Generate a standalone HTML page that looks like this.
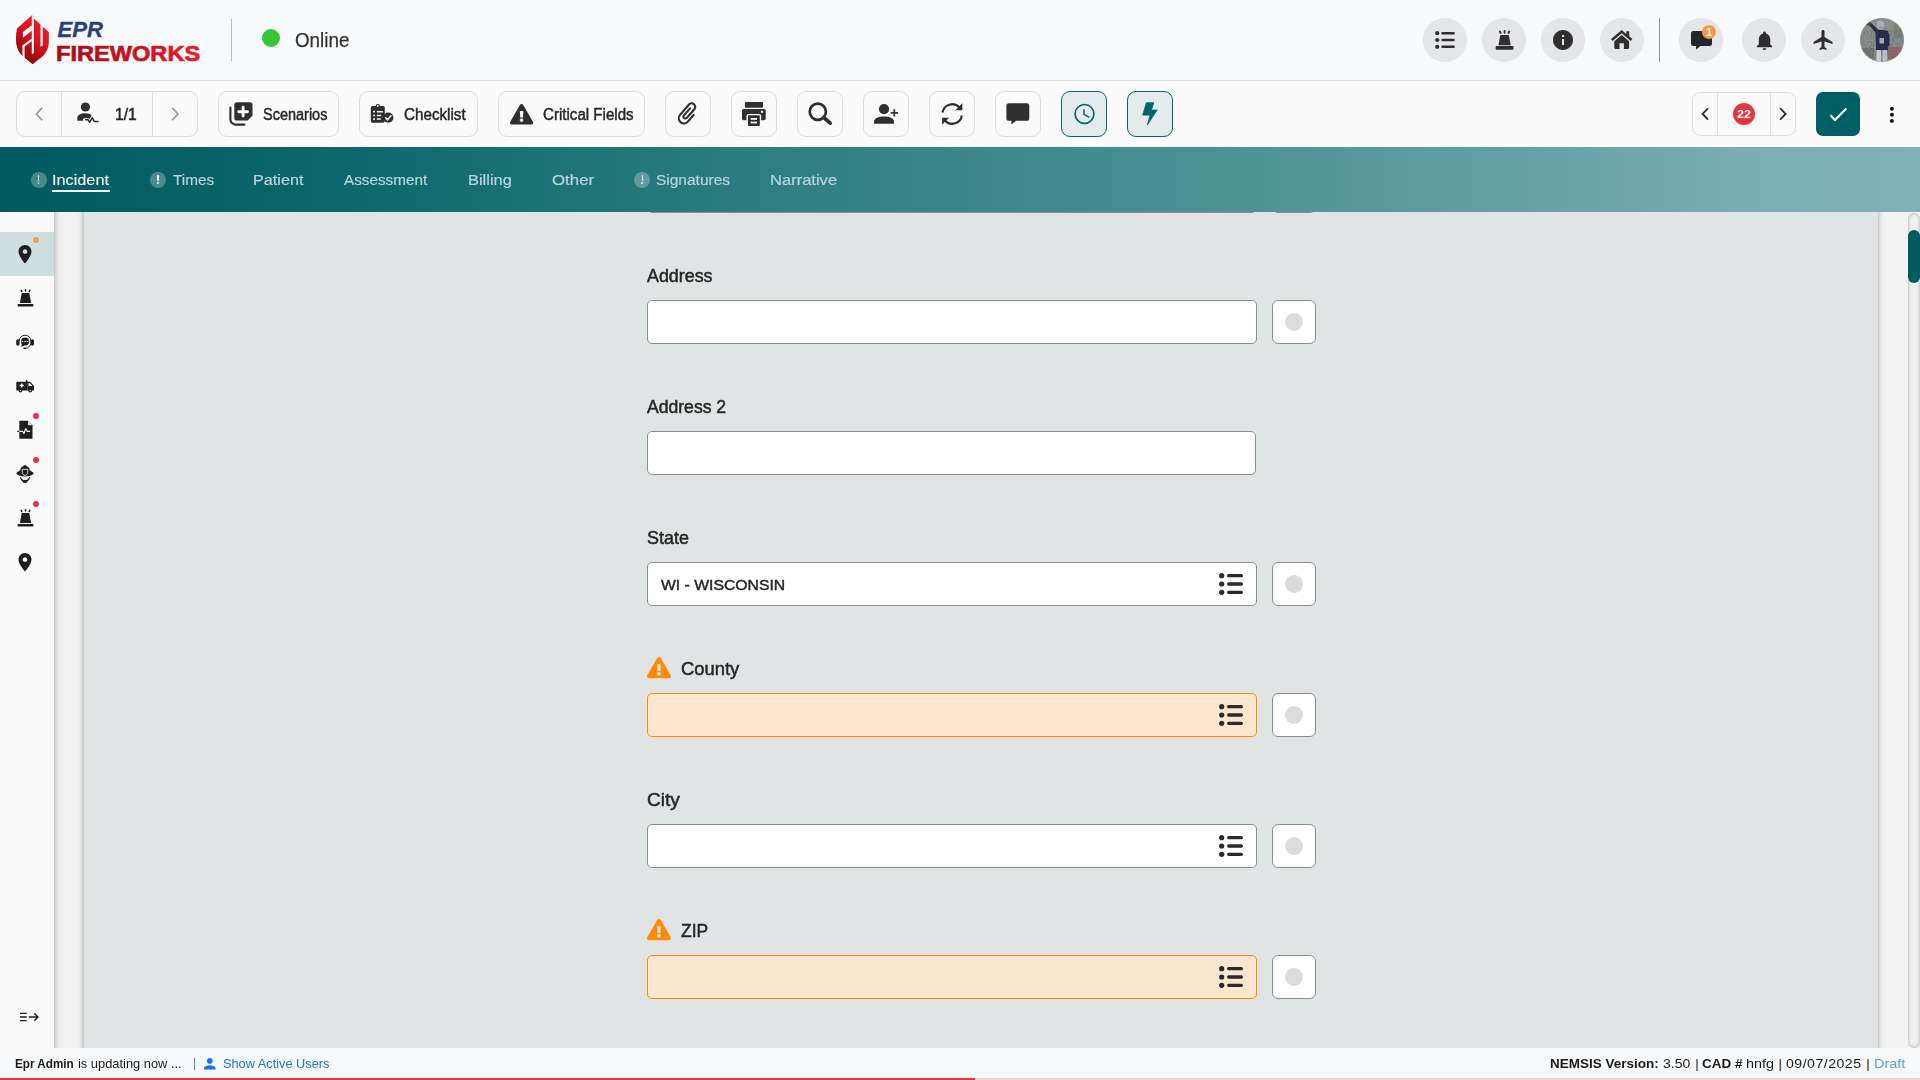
<!DOCTYPE html>
<html lang="en">
<head>
<meta charset="utf-8">
<title>EPR Fireworks</title>
<style>
*{box-sizing:border-box;margin:0;padding:0}
html,body{width:1920px;height:1080px;overflow:hidden}
body{position:relative;background:#f8f9fa;font-family:"Liberation Sans",sans-serif;color:#2b2b2b}
.abs{position:absolute}
.t{position:absolute;white-space:pre;line-height:1;transform-origin:0 50%;display:block}
svg{position:absolute;display:block;overflow:visible}
/* header */
#header{position:absolute;left:0;top:0;width:1920px;height:81px;background:#f8f9fa;border-bottom:1px solid #dadcde}
.circ{position:absolute;top:18px;width:44px;height:44px;border-radius:50%;background:#e4e6ea}
/* toolbar */
#toolbar{position:absolute;left:0;top:81px;width:1920px;height:66px;background:#fafafa}
.btn{position:absolute;top:91px;height:46px;border:1px solid #dcdcdc;border-radius:9px;background:#fafafa}
.btn.on{background:#e3ebec;border-color:#0b666b}
.tb{font-size:16px;color:#262626;-webkit-text-stroke:.45px #262626}
/* tabs */
#tabs{position:absolute;left:0;top:147px;width:1920px;height:65px;background:linear-gradient(90deg,#005a60 0%,#0c676c 18%,#2d7e82 40%,#4d9396 65%,#7baeb0 92%,#80b1b3 100%)}
.tab{color:#b9d6d7;font-size:15.500px;-webkit-text-stroke:.2px #b9d6d7}
.ex{position:absolute;width:16px;height:16px;border-radius:50%;background:rgba(255,255,255,.28)}
.ex:before{content:"";position:absolute;left:7.200px;top:3.300px;width:1.600px;height:6px;background:#fff;border-radius:1px}
.ex:after{content:"";position:absolute;left:7.100px;top:10.700px;width:1.800px;height:1.800px;background:#fff;border-radius:1px}
/* body areas */
#side{position:absolute;left:0;top:212px;width:54px;height:836px;background:#fafafa}
#gapl{position:absolute;left:54px;top:212px;width:30px;height:836px;background:linear-gradient(90deg,#c5c5c5 0,#cfcfcf 1px,#dadada 2px,#e3e3e3 3px,#eaeaea 4.500px,#efefef 6.500px,#f2f2f2 10px,#f2f2f2 24px,#ebebeb 26px,#e0e0e0 27.500px,#cfcfcf 29px,#c8c9c9 30px)}
#main{position:absolute;left:84px;top:212px;width:1794px;height:836px;background:#e0e4e5}
#gapr{position:absolute;left:1878px;top:212px;width:30px;height:836px;background:linear-gradient(90deg,#c4c4c4 0,#d4d4d4 1px,#e4e4e4 2.500px,#eeeeee 4.500px,#f3f3f3 7px,#f3f3f3 100%)}
#sbar{position:absolute;left:1908px;top:212px;width:12px;height:836px;background:#f3f3f3}
#sbar:after{content:"";position:absolute;left:0;top:1px;width:12px;height:835px;border-radius:6px;background:#f0f0f0;box-shadow:inset 0 0 3.500px rgba(0,0,0,.32)}
#thumb{position:absolute;left:1908px;top:230px;width:12px;height:53px;border-radius:6px;background:#005c61}
/* form */
.lbl{font-size:18.5px;font-weight:400;color:#262626;-webkit-text-stroke:.5px #262626}
.inp{position:absolute;left:647px;width:610px;height:44px;border:1px solid #8c8c8c;border-radius:5px;background:#fff}
.inp.warn{background:#fce6d0;border-color:#ff8c00}
.sq{position:absolute;left:1272px;width:44px;height:44px;border:1px solid #8c8c8c;border-radius:6px;background:#fff}
.sq:after{content:"";position:absolute;left:12px;top:12px;width:18px;height:18px;border-radius:50%;background:#dbdbdb}
/* footer */
#footer{position:absolute;left:0;top:1048px;width:1920px;height:32px;background:#f8f9fa}
.ft{font-size:13px;color:#1a1a1a}
</style>
</head>
<body>
<div id="header"></div>
<div id="toolbar"></div>
<div id="tabs"></div>
<div id="side"></div>
<div id="gapl"></div>
<div id="main"></div>
<div id="gapr"></div>
<div id="sbar"></div>
<div id="thumb"></div>
<div id="footer"></div>
<!--HEADER-->
<svg style="left:14px;top:13px" width="38" height="54" viewBox="14 13 38 54">
<defs><linearGradient id="lg1" x1="0.7" y1="0.15" x2="0.3" y2="0.9"><stop offset="0" stop-color="#ec1c24"/><stop offset="0.4" stop-color="#d8161e"/><stop offset="0.8" stop-color="#a50a12"/><stop offset="1" stop-color="#9c0810"/></linearGradient>
<linearGradient id="lg2" gradientUnits="userSpaceOnUse" x1="56" y1="0" x2="200" y2="0"><stop offset="0" stop-color="#a50d15"/><stop offset="0.55" stop-color="#c8131b"/><stop offset="1" stop-color="#ee1c25"/></linearGradient></defs>
<path fill="url(#lg1)" d="M31.9 15.2 L17 28.6 C16 34 15.8 39 16.2 43.5 C17 49 19.5 53.5 23 56.5 L32.6 64.3 L43 56 C46.5 52.5 48.6 48 48.8 43 L48.9 32.2 L42.8 26.7 L34 18.6 L34 17 Z"/>
<g fill="#f8f9fa"><path d="M31.8 15 L33.9 17.5 L33.9 53 L31.8 54.6 Z"/><path d="M22.9 31.9 L31.8 25.3 L31.8 30.8 L22.9 37.8 Z"/><path d="M31.8 38.6 L22.4 45.4 L22.4 57 L24.6 58.2 L24.6 46.6 L31.8 41.2 Z"/><path d="M40.5 24.2 L42.8 26.4 L42.8 45.4 L40.5 46.8 Z"/></g>
</svg>
<svg style="left:0;top:0" width="240" height="80"><text x="57.5" y="37.2" font-family="Liberation Sans" font-size="21.5" font-weight="700" font-style="italic" fill="#2a3f7f" stroke="#2a3f7f" stroke-width=".3" textLength="45.5" lengthAdjust="spacingAndGlyphs">EPR</text><text x="56" y="61.4" font-family="Liberation Sans" font-size="22.6" font-weight="700" fill="url(#lg2)" stroke="url(#lg2)" stroke-width=".7" textLength="144.2" lengthAdjust="spacingAndGlyphs">FIREWORKS</text></svg>
<div class="abs" style="left:231px;top:19px;width:1px;height:42px;background:#b9b9b9"></div>
<div class="abs" style="left:262px;top:29px;width:18px;height:18px;border-radius:50%;background:#34c634"></div>
<span class="t" style="left:295px;top:30px;font-size:20px;color:#333;-webkit-text-stroke:.25px #333;transform:scaleX(0.94)">Online</span>
<div class="circ" style="left:1423px"></div>
<div class="circ" style="left:1482px"></div>
<div class="circ" style="left:1541px"></div>
<div class="circ" style="left:1600px"></div>
<div class="circ" style="left:1679px"></div>
<div class="circ" style="left:1742px"></div>
<div class="circ" style="left:1801px"></div>
<div class="abs" style="left:1659px;top:18px;width:1px;height:44px;background:#9a9a9a"></div>
<svg style="left:1435px;top:31px" width="20" height="18" viewBox="0 0 20 18"><g fill="#2f2f2f"><circle cx="2.2" cy="2.2" r="2.1"/><circle cx="2.2" cy="9" r="2.1"/><circle cx="2.2" cy="15.8" r="2.1"/><rect x="6.3" y="0.9" width="13.5" height="2.7" rx="1.35"/><rect x="6.3" y="7.65" width="13.5" height="2.7" rx="1.35"/><rect x="6.3" y="14.4" width="13.5" height="2.7" rx="1.35"/></g></svg>
<svg style="left:1494.500px;top:30px" width="19.200" height="20" viewBox="0 0 20 20" preserveAspectRatio="none"><g fill="#2f2f2f"><path d="M6.200 5 H13.800 a.8 .8 0 0 1 .8 .65 L16.400 15.200 H3.600 L5.400 5.650 a.8 .8 0 0 1 .8 -.65 Z"/><rect x="0.700" y="16" width="18.600" height="3.800" rx="1.100"/><rect x="9" y="0" width="2" height="3.800" rx="1"/><rect x="4.500" y="0.500" width="2" height="3.600" rx="1" transform="rotate(-30 5.500 2.300)"/><rect x="13.500" y="0.500" width="2" height="3.600" rx="1" transform="rotate(30 14.500 2.300)"/></g></svg>
<svg style="left:1553px;top:30px" width="20" height="20" viewBox="2 2 20 20"><path fill="#2f2f2f" d="M12 2C6.48 2 2 6.48 2 12s4.48 10 10 10 10-4.480 10-10S17.520 2 12 2zm1 15h-2v-6h2v6zm0-8h-2V7h2v2z"/></svg>
<svg style="left:1611.300px;top:30.300px" width="21.400" height="19" viewBox="0 0 21.400 19"><g fill="#2f2f2f"><path d="M10.700 0 L0 9 L1.600 10.900 L10.700 3.300 L19.800 10.900 L21.400 9 L18.200 6.300 V1.300 H15.300 V3.900 Z"/><path d="M10.700 5 L3.300 11.200 V17.800 a1.100 1.100 0 0 0 1.100 1.100 H8.500 V13.300 H12.900 V18.900 H17 a1.100 1.100 0 0 0 1.100 -1.100 V11.200 Z"/></g></svg>
<svg style="left:1691px;top:30.5px" width="21" height="19" viewBox="0 0 21 19"><path fill="#23272b" d="M2.500 0 H18.500 a2.500 2.500 0 0 1 2.500 2.500 V12.500 a2.500 2.500 0 0 1 -2.500 2.500 H9.500 L5 18.600 V15 H2.500 a2.500 2.500 0 0 1 -2.500 -2.500 V2.500 a2.500 2.500 0 0 1 2.500 -2.500 Z"/></svg>
<div class="abs" style="left:1702px;top:25px;width:14px;height:14px;border-radius:50%;background:#f39c3b"></div>
<span class="t" style="left:1706.2px;top:26.800px;font-size:10.5px;font-weight:700;color:#fff">1</span>
<svg style="left:1752.500px;top:28.5px" width="23" height="23" viewBox="0 0 24 24"><path fill="#2f2f2f" d="M12 22c1.100 0 2-.9 2-2h-4c0 1.100.89 2 2 2zm6-6v-5c0-3.070-1.640-5.640-4.500-6.320V4c0-.83-.67-1.500-1.500-1.500s-1.500.67-1.500 1.500v.68C7.630 5.360 6 7.920 6 11v5l-2 2v1h16v-1l-2-2z"/></svg>
<svg style="left:1811px;top:28px" width="24" height="24" viewBox="0 0 24 24"><path fill="#2f2f2f" transform="translate(.5 0)" d="M21 16v-2l-8-5V3.500c0-.83-.67-1.500-1.500-1.500S10 2.670 10 3.500V9l-8 5v2l8-2.500V19l-2 1.500V22l3.500-1 3.500 1v-1.500L13 19v-5.500l8 2.500z"/></svg>
<svg style="left:1860px;top:18px" width="44" height="44" viewBox="0 0 44 44"><defs><clipPath id="avc"><circle cx="22" cy="22" r="22"/></clipPath><filter id="avb" x="-20%" y="-20%" width="140%" height="140%"><feGaussianBlur stdDeviation=".6"/></filter><filter id="avn" x="0" y="0" width="100%" height="100%"><feTurbulence type="fractalNoise" baseFrequency=".55" numOctaves="2" seed="7" result="n"/><feColorMatrix in="n" type="matrix" values="0 0 0 0 .47  0 0 0 0 .5  0 0 0 0 .48  .9 .9 .9 0 -1.05"/></filter></defs>
<g clip-path="url(#avc)"><rect width="44" height="44" fill="#787e7a"/><rect width="44" height="44" filter="url(#avn)" opacity=".55"/>
<g filter="url(#avb)"><rect x="0" y="0" width="44" height="12" fill="#8d938e" opacity=".6"/><rect x="28" y="29" width="14" height="12" fill="#8f4a4c" opacity=".55"/><rect x="1" y="30" width="13" height="14" fill="#5f6663" opacity=".6"/><rect x="34" y="6" width="8" height="14" fill="#6f6a52" opacity=".4"/>
<path d="M15.500 13.500 C15.500 11.500 28 11.500 28.500 14 L28 32.500 H16 Z" fill="#272d4a"/><path d="M16 15 L8 6 L10.500 4.500 L19 12.500 Z" fill="#272d4a"/><circle cx="8.300" cy="5.300" r="2.300" fill="#5a4132"/><ellipse cx="20.500" cy="7" rx="3.800" ry="4.300" fill="#a9b0bd"/><rect x="18.500" y="8" width="4.500" height="4" rx="1.500" fill="#b98f7e"/><rect x="19.500" y="20" width="4.500" height="5.500" fill="#d5d7de" opacity=".7"/><rect x="16.500" y="32" width="4.500" height="12" fill="#c9cbd0"/><rect x="22.500" y="32" width="4.500" height="12" fill="#babdc4"/><rect x="26.500" y="16" width="3" height="12" fill="#272d4a"/></g></g></svg>
<!--/HEADER-->
<!--TOOLBAR-->
<div class="btn" style="left:16px;width:182px"></div>
<div class="abs" style="left:61px;top:92px;width:1px;height:44px;background:#dcdcdc"></div>
<div class="abs" style="left:152px;top:92px;width:1px;height:44px;background:#dcdcdc"></div>
<svg style="left:0;top:0" width="1920" height="150"><path d="M41.60 108.40 L36.40 114.00 L41.60 119.60" fill="none" stroke="#8d93a3" stroke-width="1.6" stroke-linecap="square" stroke-linejoin="miter"/></svg>
<svg style="left:0;top:0" width="1920" height="150"><path d="M172.70 108.40 L177.90 114.00 L172.70 119.60" fill="none" stroke="#8d93a3" stroke-width="1.6" stroke-linecap="square" stroke-linejoin="miter"/></svg>
<svg style="left:76px;top:100px" width="24" height="26" viewBox="76 100 24 26"><g fill="#2f2f2f"><circle cx="85.4" cy="107" r="4.6"/><path d="M77.300 120.700 V118.200 C77.300 115 80.500 113.300 85.400 113.300 C89 113.300 91 114.400 91.700 116 L89.600 120.700 Z"/></g><path d="M84.500 119.800 H88.200 L89.700 122.300 L92.300 117.600 L94.300 121.600 H98" fill="none" stroke="#fafafa" stroke-width="3.2" stroke-linejoin="round" stroke-linecap="round"/><path d="M85.500 119.800 H88.200 L89.700 122.300 L92.300 117.600 L94.300 121.600 H98" fill="none" stroke="#2f2f2f" stroke-width="1.5" stroke-linejoin="round" stroke-linecap="round"/></svg>
<span class="t tb" style="left:115.200px;top:107px;transform:scaleX(0.975)">1/1</span>
<div class="btn" style="left:218px;width:121px"></div>
<div class="btn" style="left:359px;width:119px"></div>
<div class="btn" style="left:498px;width:147px"></div>
<span class="t tb" style="left:263.300px;top:107px;transform:scaleX(0.905)">Scenarios</span>
<span class="t tb" style="left:404.200px;top:107px;transform:scaleX(0.95)">Checklist</span>
<span class="t tb" style="left:543px;top:107px;transform:scaleX(0.944)">Critical Fields</span>
<svg style="left:228px;top:100px" width="27" height="27" viewBox="228 100 27 27"><path fill="#2f2f2f" d="M237 102.300 H249.800 a2.700 2.700 0 0 1 2.700 2.700 V115.600 L247.700 120.600 H237 a2.700 2.700 0 0 1 -2.700 -2.700 V105 a2.700 2.700 0 0 1 2.700 -2.700 Z"/><path d="M243.100 107.300 V116.100 M238.700 111.700 H247.500" stroke="#fafafa" stroke-width="2.900" stroke-linecap="round"/><path d="M230.400 107.600 V119.400 a5.200 5.200 0 0 0 5.200 5.200 H244.400" fill="none" stroke="#2f2f2f" stroke-width="2.100" stroke-linecap="round"/></svg>
<svg style="left:369px;top:102px" width="27" height="24" viewBox="369 102 27 24"><g fill="#2f2f2f"><rect x="370.800" y="106" width="14" height="16.700" rx="1.700"/><path d="M375.500 107.500 V106.300 a2.300 2.300 0 0 1 4.600 0 V107.500 Z"/><circle cx="388.300" cy="117.700" r="5.100"/></g><circle cx="377.800" cy="105.900" r="0.900" fill="#fafafa"/><g fill="#fafafa"><rect x="373.200" y="110.800" width="1.700" height="1.700"/><rect x="373.200" y="114.600" width="1.700" height="1.700"/><rect x="373.200" y="118.200" width="1.700" height="1.700"/><rect x="376.800" y="110.900" width="6.100" height="1.500" rx=".5"/><rect x="376.800" y="114.700" width="4.500" height="1.500" rx=".5"/><rect x="376.800" y="118.300" width="4" height="1.500" rx=".5"/></g><path d="M385.600 117.800 L387.500 119.800 L391 115.800" fill="none" stroke="#fafafa" stroke-width="1.600" stroke-linecap="round" stroke-linejoin="round"/></svg>
<svg style="left:509.500px;top:103.800px" width="23.200" height="20.600" viewBox="0 0 576 512"><path fill="#2f2f2f" d="M569.517 440.013C587.975 472.007 564.806 512 527.940 512H48.054c-36.937 0-59.999-40.055-41.577-71.987L246.423 23.985c18.467-32.009 64.720-31.951 83.154 0l239.940 416.028zM288 354c-25.405 0-46 20.595-46 46s20.595 46 46 46 46-20.595 46-46-20.595-46-46-46zm-43.673-165.346l7.418 136c.347 6.364 5.609 11.346 11.982 11.346h48.546c6.373 0 11.635-4.982 11.982-11.346l7.418-136c.375-6.874-5.098-12.654-11.982-12.654h-63.383c-6.884 0-12.356 5.780-11.981 12.654z"/></svg>
<div class="btn" style="left:665px;width:46px"></div>
<div class="btn" style="left:731px;width:46px"></div>
<div class="btn" style="left:797px;width:46px"></div>
<div class="btn" style="left:863px;width:46px"></div>
<div class="btn" style="left:929px;width:46px"></div>
<div class="btn" style="left:995px;width:46px"></div>
<div class="btn on" style="left:1061px;width:46px"></div>
<div class="btn on" style="left:1127px;width:46px"></div>
<svg style="left:0;top:0" width="1920" height="150"><g transform="translate(687.900 113.700) rotate(41) scale(1.090) translate(-12.500 -12)"><path d="M17.250 9.500 V17.500 a4.750 4.750 0 0 1 -9.500 0 V5 a3.250 3.250 0 0 1 6.500 0 V15.500 a1.750 1.750 0 0 1 -3.500 0 V7" fill="none" stroke="#2f2f2f" stroke-width="1.950" stroke-linecap="round"/></g></svg>
<svg style="left:741px;top:101px" width="26" height="26" viewBox="741 101 26 26"><g fill="#2f2f2f"><rect x="744.900" y="102.100" width="18.200" height="5.600" rx="1"/><rect x="742" y="109" width="23.700" height="11.200" rx="1.600"/><rect x="747.200" y="114.600" width="13.300" height="12" rx="1.500" stroke="#fafafa" stroke-width="1.400"/></g><rect x="750.700" y="118" width="6.300" height="1.800" fill="#fafafa"/><rect x="750.700" y="121.600" width="6.300" height="1.800" fill="#fafafa"/><rect x="761" y="110.800" width="2" height="2" fill="#fafafa"/></svg>
<svg style="left:805px;top:100px" width="30" height="28" viewBox="805 100 30 28"><circle cx="817.800" cy="111.700" r="8.100" fill="none" stroke="#2f2f2f" stroke-width="2.700"/><path d="M823.900 117.600 L830.200 123.200" stroke="#2f2f2f" stroke-width="3.600" stroke-linecap="round"/></svg>
<svg style="left:872px;top:102px" width="28" height="24" viewBox="872 102 28 24"><g fill="#2f2f2f"><circle cx="884" cy="109.100" r="5.100"/><path d="M874 123.700 V121.600 C874 118.300 878.500 116.400 884 116.400 C889.500 116.400 894 118.300 894 121.600 V123.700 Z"/></g><path d="M894.300 109.300 V116.500 M890.700 112.900 H897.900" stroke="#2f2f2f" stroke-width="1.700"/></svg>
<svg style="left:939px;top:101px" width="27" height="27" viewBox="939 101 27 27"><g fill="none" stroke="#2f2f2f" stroke-width="2.100" stroke-linecap="butt"><path d="M942.600 112.500 A9.700 9.700 0 0 1 959.300 107.300"/><path d="M961.800 115.500 A9.700 9.700 0 0 1 945.100 120.700"/></g><path fill="#2f2f2f" d="M962.300 103.300 V110.300 H955.300 Z"/><path fill="#2f2f2f" d="M942.100 124.700 V117.700 H949.100 Z"/></svg>
<svg style="left:1006px;top:103px" width="24" height="23" viewBox="1006 103 24 23"><path fill="#2f2f2f" d="M1009 103.300 H1026.700 a2.600 2.600 0 0 1 2.600 2.600 V118.200 a2.600 2.600 0 0 1 -2.600 2.600 H1016.200 L1011.400 124.600 V120.800 H1009 a2.600 2.600 0 0 1 -2.600 -2.600 V105.900 a2.600 2.600 0 0 1 2.600 -2.600 Z"/></svg>
<svg style="left:1072px;top:102px" width="25" height="25" viewBox="1072 102 25 25"><circle cx="1084.500" cy="113.900" r="9.400" fill="none" stroke="#0b666b" stroke-width="1.700"/><path d="M1084 109.300 V114.300 L1089.300 117.400" fill="none" stroke="#0b666b" stroke-width="1.500"/></svg>
<svg style="left:0;top:0" width="1920" height="150"><path fill="#05646a" stroke="#05646a" stroke-width=".8" stroke-linejoin="round" d="M1146.400 102.700 L1153.800 102.700 L1151.400 110 L1157.200 110 L1147.400 124.900 L1150 115.100 L1142.700 115.100 Z"/></svg>
<div class="btn" style="left:1692px;top:92px;height:44px;width:104px;border-radius:8px"></div>
<div class="abs" style="left:1717px;top:93px;width:1px;height:42px;background:#dcdcdc"></div>
<div class="abs" style="left:1770px;top:93px;width:1px;height:42px;background:#dcdcdc"></div>
<svg style="left:0;top:0" width="1920" height="150"><path d="M1707.40 108.90 L1702.60 113.90 L1707.40 118.90" fill="none" stroke="#1f2a36" stroke-width="1.8" stroke-linecap="square" stroke-linejoin="miter"/></svg>
<svg style="left:0;top:0" width="1920" height="150"><path d="M1780.80 108.90 L1785.60 113.90 L1780.80 118.90" fill="none" stroke="#1f2a36" stroke-width="1.8" stroke-linecap="square" stroke-linejoin="miter"/></svg>
<div class="abs" style="left:1733px;top:103px;width:22px;height:22px;border-radius:50%;background:#e8353b"></div>
<span class="t" style="left:1737.200px;top:109.200px;font-size:11px;font-weight:700;color:#fff;transform:scaleX(1.150)">22</span>
<div class="abs" style="left:1816px;top:92px;width:44px;height:44px;border-radius:7px;background:#005f64"></div>
<svg style="left:1816px;top:92px" width="44" height="44" viewBox="1816 92 44 44"><path d="M1830.400 115.300 L1835 119.900 L1846.300 108.600" fill="none" stroke="#fff" stroke-width="2.100"/></svg>
<svg style="left:1886px;top:104px" width="12" height="22" viewBox="1886 104 12 22"><g fill="#111"><circle cx="1891.900" cy="108.700" r="1.950"/><circle cx="1891.900" cy="114.800" r="1.950"/><circle cx="1891.900" cy="120.900" r="1.950"/></g></svg>
<!--/TOOLBAR-->
<!--TABS-->
<span class="t tab" style="left:52.4px;top:172px;transform:scaleX(1.0498);color:#fff">Incident</span>
<div class="ex" style="left:30.6px;top:171.500px"></div>
<span class="t tab" style="left:172.5px;top:172px;transform:scaleX(0.9873)">Times</span>
<div class="ex" style="left:150.3px;top:171.500px"></div>
<span class="t tab" style="left:252.800px;top:172px;transform:scaleX(1.0441)">Patient</span>
<span class="t tab" style="left:344.2px;top:172px;transform:scaleX(0.9856)">Assessment</span>
<span class="t tab" style="left:468px;top:172px;transform:scaleX(1.0590)">Billing</span>
<span class="t tab" style="left:551.8px;top:172px;transform:scaleX(1.0882)">Other</span>
<span class="t tab" style="left:656.1px;top:172px;transform:scaleX(0.9985)">Signatures</span>
<div class="ex" style="left:634.4px;top:171.500px"></div>
<span class="t tab" style="left:769.800px;top:172px;transform:scaleX(1.0670)">Narrative</span>
<div class="abs" style="left:52px;top:190.300px;width:58px;height:1.600px;background:#fff"></div>
<!--/TABS-->
<!--SIDE-->
<div class="abs" style="left:0;top:232px;width:54px;height:44px;background:#cfdfe0"></div>
<svg style="left:18px;top:244.5px" width="14" height="18.500" viewBox="5 2 14 20"><path fill="#1e1e1e" d="M12 2C8.130 2 5 5.130 5 9c0 5.250 7 13 7 13s7-7.750 7-13c0-3.870-3.130-7-7-7zm0 9.500c-1.380 0-2.500-1.120-2.500-2.500s1.120-2.500 2.500-2.500 2.500 1.120 2.500 2.500-1.120 2.500-2.500 2.500z"/></svg>
<svg style="left:18px;top:552.5px" width="14" height="18.500" viewBox="5 2 14 20"><path fill="#1e1e1e" d="M12 2C8.130 2 5 5.130 5 9c0 5.250 7 13 7 13s7-7.750 7-13c0-3.870-3.130-7-7-7zm0 9.500c-1.380 0-2.500-1.120-2.500-2.500s1.120-2.500 2.500-2.500 2.500 1.120 2.500 2.500-1.120 2.500-2.500 2.500z"/></svg>
<svg style="left:16.5px;top:289.3px" width="17" height="17.8" viewBox="0 0 20 20" preserveAspectRatio="none"><g fill="#1e1e1e"><path d="M5.600 4.600 H14.400 L16.600 15.600 H3.400 Z"/><rect x="0.800" y="16.800" width="18.400" height="3" rx="0.600"/><rect x="9.100" y="0" width="1.800" height="3.200" rx="0.900"/><rect x="4.400" y="0.600" width="1.800" height="3.200" rx="0.900" transform="rotate(-28 5.300 2.200)"/><rect x="13.800" y="0.600" width="1.800" height="3.200" rx="0.900" transform="rotate(28 14.700 2.200)"/></g></svg>
<svg style="left:16.5px;top:509.3px" width="17" height="17.8" viewBox="0 0 20 20" preserveAspectRatio="none"><g fill="#1e1e1e"><path d="M5.600 4.600 H14.400 L16.600 15.600 H3.400 Z"/><rect x="0.800" y="16.800" width="18.400" height="3" rx="0.600"/><rect x="9.100" y="0" width="1.800" height="3.200" rx="0.900"/><rect x="4.400" y="0.600" width="1.800" height="3.200" rx="0.900" transform="rotate(-28 5.300 2.200)"/><rect x="13.800" y="0.600" width="1.800" height="3.200" rx="0.900" transform="rotate(28 14.700 2.200)"/></g></svg>
<svg style="left:15px;top:332px" width="20" height="20" viewBox="15 332 20 20"><path d="M19.300 341 A5.800 5.800 0 0 1 30.900 341" fill="none" stroke="#1e1e1e" stroke-width="1"/><path d="M30.900 341.200 C31.200 345 29.500 348 24.800 348.400" fill="none" stroke="#1e1e1e" stroke-width="1" stroke-linecap="round"/><circle cx="25.060" cy="341.500" r="4.050" fill="#1e1e1e"/><path d="M21.100 346.700 L22 343.500 L24.500 345.500 Z" fill="#1e1e1e"/><rect x="16.200" y="339.300" width="3.300" height="6.400" rx="1.600" fill="#1e1e1e"/><rect x="30.700" y="339.300" width="3.300" height="6.400" rx="1.600" fill="#1e1e1e"/><ellipse cx="24.600" cy="348.300" rx="1.500" ry=".8" fill="#1e1e1e"/><g fill="#fafafa"><circle cx="22.500" cy="341.500" r=".75"/><circle cx="25" cy="341.500" r=".75"/><circle cx="27.500" cy="341.500" r=".75"/></g></svg>
<svg style="left:15px;top:378px" width="20" height="16" viewBox="15 378 20 16"><g fill="#1e1e1e"><path d="M17.300 381.800 H27.200 V390.600 H16.300 V382.800 a1 1 0 0 1 1 -1 Z"/><path d="M27.200 381.800 H30.300 L34 386 V390.600 H27.200 Z"/><path d="M26.500 379.500 L28.200 381.800 H25.500 Z"/><circle cx="20.400" cy="390.600" r="1.900"/><circle cx="30.200" cy="390.600" r="1.900"/></g><path d="M21.700 383.500 V387.500 M19.700 385.500 H23.700" stroke="#fafafa" stroke-width="1.500"/><path d="M28.500 383.300 H30 L32.400 386.100 H28.500 Z" fill="#fafafa"/><circle cx="20.400" cy="390.600" r=".7" fill="#fafafa"/><circle cx="30.200" cy="390.600" r=".7" fill="#fafafa"/></svg>
<svg style="left:16px;top:420px" width="18" height="20" viewBox="16 420 18 20"><path fill="#1e1e1e" d="M19.300 420.800 H28 L32.500 425.300 V438.700 H19.300 Z"/><path d="M28 420.800 V425.300 H32.500 Z" fill="#fafafa" opacity=".85"/><path d="M17.200 431.300 H22.500 L24 433.300 L25.700 428.600 L27.200 431.300 H30" fill="none" stroke="#fafafa" stroke-width="1.200" stroke-linejoin="round"/><path d="M17.200 431.300 H19.300" stroke="#1e1e1e" stroke-width="1.200"/></svg>
<svg style="left:15px;top:464px" width="20" height="20" viewBox="15 464 20 20"><g fill="#1e1e1e"><path d="M16.200 473.600 C17.300 471.600 19.300 470.900 20.200 470.300 C20.300 467.600 22.400 466.100 25 466.100 C27.600 466.100 29.700 467.600 29.800 470.300 C30.700 470.900 32.700 471.600 33.800 473.600 C32.500 475.600 28.800 476.400 25 476.400 C21.200 476.400 17.500 475.600 16.200 473.600 Z"/><circle cx="25" cy="466.700" r="1.600"/><path d="M19.600 477.100 C20.800 480.300 22.800 482.700 25 482.700 C27.200 482.700 29.200 480.300 30.400 477.100 L29.300 477.300 C28.300 479.300 26.800 480.300 25 480.300 C23.200 480.300 21.700 479.300 20.700 477.300 Z"/><ellipse cx="25" cy="481.300" rx="2.400" ry="1.500"/></g><path d="M22.300 469.300 H27.700 V472.200 C27.700 474 26.300 475.200 25 475.600 C23.700 475.200 22.300 474 22.300 472.200 Z" fill="#1e1e1e" stroke="#e8e8e8" stroke-width=".9"/></svg>
<div class="abs" style="left:33px;top:237px;width:6.400px;height:6.400px;border-radius:50%;background:#f4a340"></div>
<div class="abs" style="left:32.800px;top:413.05px;width:6.300px;height:6.300px;border-radius:50%;background:#e9323b"></div>
<div class="abs" style="left:32.800px;top:457.05px;width:6.300px;height:6.300px;border-radius:50%;background:#e9323b"></div>
<div class="abs" style="left:32.800px;top:500.65px;width:6.300px;height:6.300px;border-radius:50%;background:#e9323b"></div>
<svg style="left:18px;top:1010px" width="22" height="14" viewBox="18 1010 22 14"><g stroke="#222" stroke-width="1.300" fill="none"><path d="M20 1013.300 H26.800 M20 1017 H26.800 M20 1020.700 H26.800"/><path d="M28.800 1017 H37.500 M34.300 1013.300 L37.900 1017 L34.300 1020.700" stroke-width="1.500"/></g></svg>
<!--/SIDE-->
<!--FORM-->
<div class="abs" style="left:0;top:212px;width:1920px;height:4px;overflow:hidden"><div class="inp" style="top:-43px"></div><div class="sq" style="top:-43px"></div></div>
<span class="t lbl" style="left:646.6px;top:267.25px;transform:scaleX(0.9649)">Address</span>
<div class="inp" style="top:300px;width:610px"></div>
<div class="sq" style="top:300px"></div>
<span class="t lbl" style="left:646.6px;top:398.25px;transform:scaleX(0.9496)">Address 2</span>
<div class="inp" style="top:431px;width:609px"></div>
<span class="t lbl" style="left:646.6px;top:529.25px;transform:scaleX(0.9699)">State</span>
<div class="inp" style="top:562px;width:610px"></div>
<svg style="left:1219px;top:573px" width="24" height="22" viewBox="0 0 24 22"><g fill="#2a2a2a"><circle cx="2.7" cy="2.7" r="2.6"/><circle cx="2.7" cy="11" r="2.6"/><circle cx="2.7" cy="19.3" r="2.6"/><rect x="8" y="1.05" width="16" height="3.3" rx="1.65"/><rect x="8" y="9.35" width="16" height="3.3" rx="1.65"/><rect x="8" y="17.65" width="16" height="3.3" rx="1.65"/></g></svg>
<div class="sq" style="top:562px"></div>
<span class="t" style="left:660.6px;top:576.5px;font-size:15.5px;font-weight:400;color:#262626;-webkit-text-stroke:.45px #262626;transform:scaleX(1.016)">WI - WISCONSIN</span>
<svg style="left:647px;top:657.3px" width="24" height="21.4" viewBox="0 0 576 512"><path fill="#ff8c00" d="M569.517 440.013C587.975 472.007 564.806 512 527.940 512H48.054c-36.937 0-59.999-40.055-41.577-71.987L246.423 23.985c18.467-32.009 64.720-31.951 83.154 0l239.940 416.028zM288 354c-25.405 0-46 20.595-46 46s20.595 46 46 46 46-20.595 46-46-20.595-46-46-46zm-43.673-165.346l7.418 136c.347 6.364 5.609 11.346 11.982 11.346h48.546c6.373 0 11.635-4.982 11.982-11.346l7.418-136c.375-6.874-5.098-12.654-11.982-12.654h-63.383c-6.884 0-12.356 5.780-11.981 12.654z"/></svg>
<span class="t lbl" style="left:680.8px;top:660.25px;transform:scaleX(0.9945)">County</span>
<div class="inp warn" style="top:693px;width:610px"></div>
<svg style="left:1219px;top:704px" width="24" height="22" viewBox="0 0 24 22"><g fill="#2a2a2a"><circle cx="2.7" cy="2.7" r="2.6"/><circle cx="2.7" cy="11" r="2.6"/><circle cx="2.7" cy="19.3" r="2.6"/><rect x="8" y="1.05" width="16" height="3.3" rx="1.65"/><rect x="8" y="9.35" width="16" height="3.3" rx="1.65"/><rect x="8" y="17.65" width="16" height="3.3" rx="1.65"/></g></svg>
<div class="sq" style="top:693px"></div>
<span class="t lbl" style="left:646.6px;top:791.25px;transform:scaleX(1.0289)">City</span>
<div class="inp" style="top:824px;width:610px"></div>
<svg style="left:1219px;top:835px" width="24" height="22" viewBox="0 0 24 22"><g fill="#2a2a2a"><circle cx="2.7" cy="2.7" r="2.6"/><circle cx="2.7" cy="11" r="2.6"/><circle cx="2.7" cy="19.3" r="2.6"/><rect x="8" y="1.05" width="16" height="3.3" rx="1.65"/><rect x="8" y="9.35" width="16" height="3.3" rx="1.65"/><rect x="8" y="17.65" width="16" height="3.3" rx="1.65"/></g></svg>
<div class="sq" style="top:824px"></div>
<svg style="left:647px;top:919.3px" width="24" height="21.4" viewBox="0 0 576 512"><path fill="#ff8c00" d="M569.517 440.013C587.975 472.007 564.806 512 527.940 512H48.054c-36.937 0-59.999-40.055-41.577-71.987L246.423 23.985c18.467-32.009 64.720-31.951 83.154 0l239.940 416.028zM288 354c-25.405 0-46 20.595-46 46s20.595 46 46 46 46-20.595 46-46-20.595-46-46-46zm-43.673-165.346l7.418 136c.347 6.364 5.609 11.346 11.982 11.346h48.546c6.373 0 11.635-4.982 11.982-11.346l7.418-136c.375-6.874-5.098-12.654-11.982-12.654h-63.383c-6.884 0-12.356 5.780-11.981 12.654z"/></svg>
<span class="t lbl" style="left:680.8px;top:922.25px;transform:scaleX(0.9451)">ZIP</span>
<div class="inp warn" style="top:955px;width:610px"></div>
<svg style="left:1219px;top:966px" width="24" height="22" viewBox="0 0 24 22"><g fill="#2a2a2a"><circle cx="2.7" cy="2.7" r="2.6"/><circle cx="2.7" cy="11" r="2.6"/><circle cx="2.7" cy="19.3" r="2.6"/><rect x="8" y="1.05" width="16" height="3.3" rx="1.65"/><rect x="8" y="9.35" width="16" height="3.3" rx="1.65"/><rect x="8" y="17.65" width="16" height="3.3" rx="1.65"/></g></svg>
<div class="sq" style="top:955px"></div>
<!--/FORM-->
<!--FOOTER-->
<span class="t ft" style="left:15.300px;top:1057px;font-weight:700;transform:scaleX(0.900)">Epr Admin</span>
<span class="t ft" style="left:77.800px;top:1057px;transform:scaleX(0.989)">is updating now ...</span>
<div class="abs" style="left:194.300px;top:1057.500px;width:1.200px;height:12px;background:#3b82e6"></div>
<svg style="left:204px;top:1057.700px" width="11.600" height="11.600" viewBox="4 4 16 16"><path fill="#1a73e8" d="M12 12c2.210 0 4-1.790 4-4s-1.790-4-4-4-4 1.790-4 4 1.790 4 4 4zm0 2c-2.670 0-8 1.340-8 4v2h16v-2c0-2.660-5.330-4-8-4z"/></svg>
<span class="t ft" style="left:223.100px;top:1057px;color:#1a73e8;transform:scaleX(0.982)">Show Active Users</span>
<span class="t ft" style="left:1549.900px;top:1057.300px;font-weight:700;transform:scaleX(1.039)">NEMSIS Version:</span>
<span class="t ft" style="left:1662.700px;top:1057.300px;transform:scaleX(1.075)">3.50</span>
<span class="t ft" style="left:1695.200px;top:1057.300px">|</span>
<span class="t ft" style="left:1701.900px;top:1057.300px;font-weight:700;transform:scaleX(1.035)">CAD #</span>
<span class="t ft" style="left:1746.200px;top:1057.300px;transform:scaleX(1.110)">hnfg</span>
<span class="t ft" style="left:1778.600px;top:1057.300px">|</span>
<span class="t ft" style="left:1786px;top:1057.300px;letter-spacing:.45px;transform:scaleX(1.086)">09/07/2025</span>
<span class="t ft" style="left:1866.200px;top:1057.300px">|</span>
<span class="t ft" style="left:1873.500px;top:1057.300px;color:#5b9fdc;transform:scaleX(1.110)">Draft</span>
<div class="abs" style="left:0;top:1078px;width:1920px;height:2px;background:#fdd0d4"></div>
<div class="abs" style="left:0;top:1078px;width:975px;height:2px;background:#e53935"></div>
<!--/FOOTER-->
</body>
</html>
